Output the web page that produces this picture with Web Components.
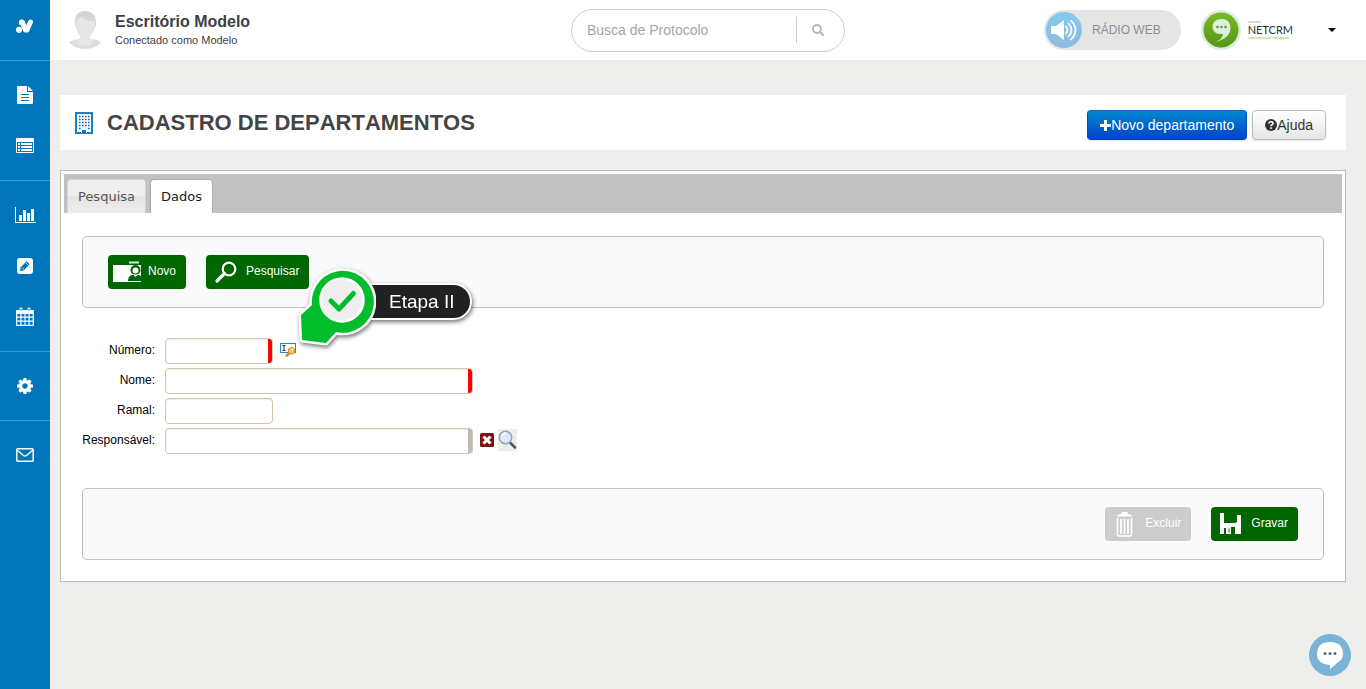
<!DOCTYPE html>
<html lang="pt-BR">
<head>
<meta charset="utf-8">
<title>Cadastro de Departamentos</title>
<style>
  body {
    margin: 0;
    background: #eeeeec;
    font-family: "Liberation Sans", Arial, sans-serif;
    font-size: 12px;
    color: #000;
  }
</style>
</head>
<body>
<app-layout>
  <side-nav slot="nav"></side-nav>
  <top-bar slot="header"></top-bar>
  <page-title>Cadastro de Departamentos</page-title>
  <tab-panel>
    <department-form></department-form>
  </tab-panel>
</app-layout>
<chat-button></chat-button>

<script>
const icons = {
  logo: ['0 0 18 14', '<path d="M6.500 3.500 9.500 11M14.500 3 11 11" stroke="currentColor" stroke-width="5" stroke-linecap="round"/><circle cx="3" cy="10.800" r="3.100" fill="currentColor"/><circle cx="5.800" cy="3.500" r="2.900" fill="currentColor"/>'],
  file: ['0 0 16 18', '<path fill="currentColor" fill-rule="evenodd" d="M1 0h9v6h6v11q0 1-1 1H1q-1 0-1-1V1q0-1 1-1zM4 8v1h8V8zM4 11v1h8v-1zM4 14v1h8v-1z"/><path fill="currentColor" d="M11 0l5 5h-5z"/>'],
  list: ['0 0 18 15', '<path fill="currentColor" fill-rule="evenodd" d="M1 0h16q1 0 1 1v13q0 1-1 1H1q-1 0-1-1V1q0-1 1-1zM1 4v10h16V4z"/><path d="M2 6h2M5 6h11M2 9h2M5 9h11M2 12h2M5 12h11" stroke="currentColor" stroke-width="2"/>'],
  chart: ['0 0 21 16', '<path fill="currentColor" d="M0 0h1v15h20v1H0zM4 8h3v6H4zM8 3h3v11H8zM12 6h3v8h-3zM16 2h3v12h-3z"/>'],
  pencil: ['0 0 16 16', '<rect width="16" height="16" rx="3" fill="currentColor"/><path d="M3 13l.7-3.800 6-6 3.100 3.100-6 6z" fill="#0075ba"/><path d="M5 9.600 7.100 11.700M9 5l2.800 2.800" stroke="#fff" stroke-width=".8"/>'],
  calendar: ['0 0 18 19', '<path fill="currentColor" fill-rule="evenodd" d="M1 3h16q1 0 1 1v14q0 1-1 1H1q-1 0-1-1V4q0-1 1-1zM1.300 7v2.500h3V7zM5.500 7v2.500h3V7zM9.500 7v2.500h3V7zM13.700 7v2.500h3V7zM1.300 10.700v2.800h3v-2.800zM5.500 10.700v2.800h3v-2.800zM9.500 10.700v2.800h3v-2.800zM13.700 10.700v2.800h3v-2.800zM1.300 14.700v3h3v-3zM5.500 14.700v3h3v-3zM9.500 14.700v3h3v-3zM13.700 14.700v3h3v-3z"/><rect x="3.500" y=".3" width="3" height="5.500" rx="1.500" fill="currentColor"/><rect x="11.500" y=".3" width="3" height="5.500" rx="1.500" fill="currentColor"/><path d="M5 1.500v2.500M13 1.500v2.500" stroke="#0075ba"/>'],
  gear: ['128 128 1536 1536', '<path fill="currentColor" d="M1152 896q0-106-75-181t-181-75-181 75-75 181 75 181 181 75 181-75 75-181zm512-109v222q0 12-8 23t-20 13l-185 28q-19 54-39 91 35 50 107 138 10 12 10 25t-9 23q-27 37-99 108t-94 71q-12 0-26-9l-138-108q-44 23-91 38-16 136-29 186-7 28-36 28h-222q-14 0-24.500-8.500t-11.500-21.500l-28-184q-49-16-90-37l-141 107q-10 9-25 9-14 0-25-11-126-114-165-168-7-10-7-23 0-12 8-23 15-21 51-66.500t54-70.500q-27-50-41-99l-183-27q-13-2-21-12.500t-8-23.500v-222q0-12 8-23t19-13l186-28q14-46 39-92-40-57-107-138-10-12-10-24 0-10 9-23 26-36 98.500-107.500t94.500-71.500q13 0 26 10l138 107q44-23 91-38 16-136 29-186 7-28 36-28h222q14 0 24.500 8.500t11.500 21.500l28 184q49 16 90 37l142-107q9-9 24-9 13 0 25 10 129 119 165 170 7 8 7 22 0 12-8 23-15 21-51 66.500t-54 70.500q26 50 41 98l183 28q13 2 21 12.500t8 23.500z"/>'],
  mail: ['0 0 18 14', '<rect x=".8" y=".8" width="16.400" height="12.400" rx="1" fill="none" stroke="currentColor" stroke-width="1.500"/><path d="M1 2q4 3.500 6.500 5.500 1.500 1 3 0Q13 5.500 17 2" fill="none" stroke="currentColor" stroke-width="1.400"/>'],
  search: ['0 0 12 12', '<circle cx="5" cy="5" r="4" fill="none" stroke="currentColor" stroke-width="1.800"/><path d="M8 8l3 3" stroke="currentColor" stroke-width="2" stroke-linecap="round"/>'],
  building: ['0 0 18 22', '<rect x="1" y="1" width="16" height="20" fill="#fff" stroke="#1a7fc0" stroke-width="2"/><path d="M4 4.500h11M4 7.500h11M4 10.500h11M4 13.500h11M4 16.500h11" stroke="#1565b0" stroke-width="1.500" stroke-dasharray="1.600 1.400"/><path d="M6 16h6v5H6z" fill="#fff"/><path d="M7 18h4v3H7z" fill="#1a6fb8"/>'],
  plus: ['0 0 11 11', '<path fill="currentColor" d="M4 0h3v4h4v3H7v4H4V7H0V4h4z"/>'],
  help: ['0 0 12 12', '<circle cx="6" cy="6" r="6" fill="currentColor"/><path d="M4 4.500q0-1.700 2-1.700t2 1.500q0 1-1 1.500T6 7.300" fill="none" stroke="#fff" stroke-width="1.600"/><rect x="5.200" y="8.300" width="1.600" height="1.600" fill="#fff"/>'],
  person: ['0 0 32 38', '<defs><linearGradient id="g" x2="0" y2="1"><stop stop-color="#d2d2d2"/><stop offset="1" stop-color="#e4e4e4"/></linearGradient></defs><path d="M0 31q5-2 9-3 0 6 7 6t8-6q5 1 8 3-5 7-16 7T0 31z" fill="#dcdcdc"/><path d="M11 20h10v7l4 2q-2 6-9 6t-9-6l4-2z" fill="#e6e6e6"/><path d="M6 10Q6 0 16 0t11 10q1 4-1 6-2 8-6 9-4 2-8 0-4-2-5-9-2-2-1-6z" fill="url(#g)"/><path d="M7 12q2-5 5-6 6 5 14 4l-1 6q-2 7-5 8-4 2-8 0-4-3-5-12z" fill="#e6e6e6"/>'],
  speaker: ['0 0 36 36', '<defs><linearGradient id="g" x2="0" y2="1"><stop stop-color="#84cbed"/><stop offset="1" stop-color="#8dbbe0"/></linearGradient></defs><circle cx="18" cy="18" r="18" fill="url(#g)"/><path d="M5 14h5l8-6v20l-8-6H5z" fill="#fff"/><path d="M20 14.500q3 3.500 0 7M22.500 11.500q6 6.500 0 13M25 8.500q9 9.500 0 19" fill="none" stroke="#fff" stroke-width="1.700" stroke-linecap="round"/>'],
  netcrm: ['0 0 40 40', '<defs><linearGradient id="g" x2="0" y2="1"><stop stop-color="#77bd22"/><stop offset="1" stop-color="#579519"/></linearGradient></defs><circle cx="20" cy="20" r="20" fill="#dcecdf"/><circle cx="20" cy="20" r="17.500" fill="url(#g)"/><path d="M14 32q8-3 8-8-10 1-10.500-7Q12 9 20.500 9q9 0 9 9 0 10-15.500 14z" fill="#ddeee0"/><g fill="#579f20"><circle cx="16.500" cy="17" r="1.300"/><circle cx="20.500" cy="17" r="1.300"/><circle cx="24.500" cy="17" r="1.300"/></g>'],
  caret: ['0 0 8 4', '<path fill="currentColor" d="M0 0h8L4 4z"/>'],
  folder: ['0 0 30 24', '<path d="M0 5h28v17H0z" fill="#fff"/><path d="M16 1.500h10v2H16z" fill="#dbe8db"/><circle cx="22.500" cy="10" r="5" fill="#060"/><circle cx="22.500" cy="10.500" r="3" fill="#fff"/><path d="M15 21q0-5 4-6h7q3 1 3 6z" fill="#060"/><path d="M20 14.500h5l-2.500 2.500z" fill="#fff"/>'],
  lens: ['0 0 30 24', '<circle cx="18" cy="9" r="6.300" fill="none" stroke="#fff" stroke-width="2.200"/><path d="M13.500 13.500 6 21" stroke="#fff" stroke-width="3.200" stroke-linecap="round"/>'],
  trash: ['0 0 30 26', '<path d="M6 5.500Q8 3 11.500 3V1h6v2q3.500 0 5.500 2.500z" fill="#fff"/><path d="M7.500 7v16.500q0 1.500 1.500 1.500h11q1.500 0 1.500-1.500V7" fill="none" stroke="#fff" stroke-width="1.600"/><path d="M11 8v15M14.500 8v15M18 8v15" stroke="#fff" stroke-width="1.800"/>'],
  save: ['0 0 30 24', '<path d="M4 1h4v10h12V3h5v19h-6v-7h-4v7h-5v-6H8v6H4z" fill="#fff"/><path d="M20 1h1v9h-1zM12.500 16.500h1v4h-1z" fill="#060"/>'],
  key: ['0 0 16 14', '<rect x=".5" y=".5" width="15" height="9" fill="#f4fbff" stroke="#278bc8"/><path d="M2.500 2.500h3M2.500 7.500h3M4 3v4" stroke="#333"/><path d="M10 9.500l-4 4" stroke="#d48b20" stroke-width="2.500"/><circle cx="11.500" cy="7.800" r="3.300" fill="#f6c55b" stroke="#d28a24"/><circle cx="12.500" cy="6.500" r=".9" fill="#fff"/>'],
  remove: ['0 0 14 14', '<rect width="14" height="14" rx="1.500" fill="#7c1416"/><path d="M3.500 3.500l7 7M10.500 3.500l-7 7" stroke="#fff" stroke-width="3"/>'],
  magnifier: ['0 0 19 22', '<path fill="#ededed" d="M0 0h19v22H0z"/><path d="M12.500 14l4.500 4.500" stroke="#555" stroke-width="2.600" stroke-linecap="round"/><circle cx="7.500" cy="8.500" r="6.200" fill="#dcebfc" stroke="#92a4bd" stroke-width="1.500"/><path d="M4 7q1-3 4-3" stroke="#fff" stroke-width="1.500" fill="none"/>'],
  chat: ['0 0 42 42', '<circle cx="21" cy="21" r="21" fill="#79b3d6"/><path d="M21 35v-4Q8 30 8 20 8 8 21 8t13 12q0 6-6 9-3 3-7 6z" fill="#fff"/><g fill="#53657b"><circle cx="16" cy="19.500" r="1.500"/><circle cx="21" cy="19.500" r="1.500"/><circle cx="26" cy="19.500" r="1.500"/></g>']
};

// drawn at the size of its viewBox unless a width is given
class AppIcon extends HTMLElement {
  connectedCallback() {
    if (this.shadowRoot) return;
    const [box, shape] = icons[this.getAttribute('name')];
    const [, , w, h] = box.split(' ').map(Number);
    const width = Number(this.getAttribute('width') || w);
    const height = Math.round(width * h / w);
    this.attachShadow({ mode: 'open' }).innerHTML = `
      <style>
        :host { display: block; flex: none; }
        svg { display: block; }
      </style>
      <svg width="${width}" height="${height}" viewBox="${box}" fill="none" aria-hidden="true">${shape}</svg>`;
  }
}

// every other element only supplies its markup and styles
class BaseElement extends HTMLElement {
  connectedCallback() {
    if (this.shadowRoot) return;
    this.attachShadow({ mode: 'open' }).innerHTML = this.render();
    this.ready();
  }

  ready() {}
}

class AppLayout extends BaseElement {
  render() {
    return `
      <style>
        :host { display: flex; min-height: 100vh; }
        .page { flex: 1; min-width: 0; }
        main { display: flex; flex-direction: column; gap: 20px; margin: 35px 20px 20px 10px; }
      </style>
      <slot name="nav"></slot>
      <div class="page">
        <slot name="header"></slot>
        <main><slot></slot></main>
      </div>`;
  }
}

class SideNav extends BaseElement {
  render() {
    const groups = [
      [['file', 'Protocolos', 16], ['list', 'Listas', 18]],
      [['chart', 'Relatórios', 21], ['pencil', 'Editar', 16], ['calendar', 'Agenda', 18]],
      [['gear', 'Configurações', 16]],
      [['mail', 'Mensagens', 18]]
    ];
    const link = ([icon, label, width]) =>
      `<a href="#" aria-label="${label}"><app-icon name="${icon}" width="${width}"></app-icon></a>`;

    return `
      <style>
        :host { display: block; flex: none; width: 50px; background: #0075ba; color: #fff; }
        a { display: flex; align-items: center; justify-content: center; height: 51px; color: inherit; }
        .logo { height: 52px; padding-bottom: 8px; border-bottom: 1px solid #26a0e8; }
        .group { padding: 8px 0 9px; border-bottom: 1px solid #26a0e8; }
        .group:last-child { border: 0; }
      </style>
      <nav>
        <a class="logo" href="#" aria-label="Início"><app-icon name="logo"></app-icon></a>
        ${groups.map(group => `<div class="group">${group.map(link).join('')}</div>`).join('')}
      </nav>`;
  }
}

class TopBar extends BaseElement {
  render() {
    return `
      <style>
        :host {
          display: grid;
          grid-template-columns: 1fr auto 1fr;
          align-items: center;
          height: 60px;
          background: #fff;
          color: #3c4045;
        }
        .user { display: flex; align-items: center; gap: 14px; padding-left: 19px; }
        strong { display: block; font-size: 16px; line-height: 20px; }
        small { display: block; font-size: 11px; line-height: 17px; }
        form {
          display: flex;
          align-items: center;
          box-sizing: border-box;
          width: 274px;
          height: 43px;
          border: 1px solid #ccc;
          border-radius: 22px;
        }
        input {
          flex: 1;
          min-width: 0;
          padding: 0 15px;
          border: 0;
          outline: 0;
          background: none;
          font: 14px "Liberation Sans", Arial, sans-serif;
        }
        input::placeholder { color: #a5a5a5; opacity: 1; }
        button { display: flex; border: 0; background: none; padding: 0; cursor: pointer; }
        .find {
          align-items: center;
          justify-content: center;
          width: 48px;
          height: 26px;
          padding-right: 6px;
          border-left: 1px solid #ccc;
          color: #b5b5b5;
        }
        .right { display: flex; align-items: center; justify-content: flex-end; gap: 20px; padding-right: 30px; }
        .radio {
          display: flex;
          align-items: center;
          gap: 10px;
          box-sizing: border-box;
          height: 40px;
          padding: 0 20px 0 2px;
          border-radius: 20px;
          background: #e5e5e5;
          color: #8d8d8d;
          text-decoration: none;
        }
        .brand { display: flex; align-items: center; gap: 7px; color: #26323c; }
        .name { display: flex; flex-direction: column; font-family: Lato, sans-serif; }
        .tiny { font: 4px/4px "Liberation Sans", sans-serif; color: #999; }
        .big { font-size: 11px; line-height: 12px; }
        .green { color: #85bd3b; }
        .menu { margin-left: 15px; color: #000; }
      </style>
      <div class="user">
        <app-icon name="person"></app-icon>
        <div><strong>Escritório Modelo</strong><small>Conectado como Modelo</small></div>
      </div>
      <form role="search">
        <input type="text" placeholder="Busca de Protocolo" aria-label="Busca de Protocolo">
        <button class="find" type="button" aria-label="Buscar"><app-icon name="search"></app-icon></button>
      </form>
      <div class="right">
        <a class="radio" href="#"><app-icon name="speaker"></app-icon>RÁDIO WEB</a>
        <div class="brand">
          <app-icon name="netcrm"></app-icon>
          <div class="name">
            <span class="tiny">sistema</span>
            <span class="big">NETCRM</span>
            <span class="tiny green">comunicação netspeed</span>
          </div>
        </div>
        <button class="menu" type="button" aria-label="Menu"><app-icon name="caret"></app-icon></button>
      </div>`;
  }
}

class PageTitle extends BaseElement {
  render() {
    return `
      <style>
        :host { display: flex; align-items: center; gap: 14px; height: 55px; padding: 0 20px 0 15px; background: #fff; }
        h1 { flex: 1; margin: 0; font-size: 22px; line-height: 28px; font-kerning: none; text-transform: uppercase; color: #444; }
        .actions { display: flex; gap: 5px; align-self: flex-end; margin-bottom: 10px; }
        button {
          display: flex;
          align-items: center;
          height: 30px;
          padding: 0 12px;
          border: 1px solid #bbb;
          border-radius: 4px;
          background: linear-gradient(#fff, #e6e6e6);
          box-shadow: 0 1px 2px rgba(0, 0, 0, .1);
          font: 14px "Liberation Sans", Arial, sans-serif;
          color: #333;
          cursor: pointer;
        }
        .primary { border-color: #0064c0 #0050c4 #003fb8; background: linear-gradient(#0088cc, #0044cc); color: #fff; }
      </style>
      <app-icon name="building"></app-icon>
      <h1><slot></slot></h1>
      <div class="actions">
        <button class="primary" type="button"><app-icon name="plus"></app-icon>Novo departamento</button>
        <button type="button"><app-icon name="help"></app-icon>Ajuda</button>
      </div>`;
  }
}

class TabPanel extends BaseElement {
  render() {
    return `
      <style>
        :host { display: block; padding: 3px; border: 1px solid #bbb; background: #fff; }
        .tabs { display: flex; align-items: flex-end; gap: 4px; height: 39px; padding-left: 3px; background: #c1c1c1; }
        button {
          height: 34px;
          padding: 0 10px;
          border: 1px solid #d3d3d3;
          border-bottom: 0;
          border-radius: 4px 4px 0 0;
          background: linear-gradient(#efefef 50%, #e4e4e4 50%, #ededed);
          font: 13px "DejaVu Sans", Verdana, sans-serif;
          color: #555;
          cursor: pointer;
        }
        button[aria-selected="true"] { border-color: #aaa; background: #fff; color: #212121; }
        section { padding: 23px 18px 18px; }
      </style>
      <div class="tabs" role="tablist">
        <button type="button" role="tab" aria-selected="false">Pesquisa</button>
        <button type="button" role="tab" aria-selected="true">Dados</button>
      </div>
      <section role="tabpanel"><slot></slot></section>`;
  }

  ready() {
    const tabs = this.shadowRoot.querySelectorAll('button');
    tabs.forEach(tab => tab.addEventListener('click', () => {
      tabs.forEach(other => other.setAttribute('aria-selected', other === tab));
    }));
  }
}

class ButtonBar extends BaseElement {
  render() {
    return `
      <style>
        :host {
          display: flex;
          gap: 20px;
          padding: 18px 25px;
          border: 1px solid #bfbfbf;
          border-radius: 5px;
          background: #fafafa;
        }
        :host([align="end"]) { justify-content: flex-end; }
      </style>
      <slot></slot>`;
  }
}

class ActionButton extends BaseElement {
  render() {
    const disabled = this.hasAttribute('disabled') ? 'disabled' : '';
    return `
      <style>
        :host { display: block; }
        button {
          display: flex;
          align-items: center;
          gap: 5px;
          height: 34px;
          padding: 0 10px 0 5px;
          border: 0;
          border-radius: 4px;
          background: #006600;
          color: #fff;
          font: 12px "Liberation Sans", Arial, sans-serif;
          cursor: pointer;
        }
        button:disabled { background: #ccc; cursor: default; }
        span { padding-bottom: 2px; }
      </style>
      <button type="button" ${disabled}>
        <app-icon name="${this.getAttribute('icon')}"></app-icon><span><slot></slot></span>
      </button>`;
  }
}

class FormField extends BaseElement {
  render() {
    return `
      <style>
        :host { display: flex; align-items: center; height: 26px; }
        label { width: 73px; margin-right: 10px; padding-bottom: 2px; text-align: right; white-space: nowrap; }
        input {
          box-sizing: border-box;
          width: 108px;
          height: 26px;
          margin: 0 7px 0 0;
          padding: 0 8px;
          border: 1px solid #d2c6ac;
          border-radius: 4px;
          outline: 0;
          background: linear-gradient(var(--mark, #fff), var(--mark, #fff)) right / 4px 100% no-repeat #fff;
          box-shadow: inset 0 1px 1px rgba(0, 0, 0, .08);
          font: 12px "Liberation Sans", Arial, sans-serif;
        }
        :host([wide]) input { width: 308px; }
        :host([required]) input { --mark: #f00; }
        :host([lookup]) input { --mark: #bbb; }
        .tools { display: flex; align-items: center; gap: 4px; padding-bottom: 2px; }
      </style>
      <label for="field">${this.getAttribute('label')}:</label>
      <input id="field" type="text">
      <div class="tools"><slot></slot></div>`;
  }
}

class IconButton extends BaseElement {
  render() {
    return `
      <style>
        :host { display: block; }
        button { display: block; padding: 0; border: 0; background: none; cursor: pointer; }
      </style>
      <button type="button" aria-label="${this.getAttribute('label')}">
        <app-icon name="${this.getAttribute('icon')}"></app-icon>
      </button>`;
  }
}

// green pin with a dark caption, floats over the form
class StepMarker extends BaseElement {
  render() {
    return `
      <style>
        :host { display: flex; align-items: center; filter: drop-shadow(1px 2px 2px rgba(0, 0, 0, .55)); }
        svg { display: block; position: relative; z-index: 1; }
        span {
          margin: -12px 0 0 -14px;
          padding: 0 15px 0 25px;
          border: 2px solid #fff;
          border-radius: 0 19px 19px 0;
          background: #212121;
          color: #fff;
          font-size: 19px;
          line-height: 33px;
        }
      </style>
      <svg width="78" height="80" viewBox="0 0 78 80" aria-hidden="true">
        <path d="M3 48 14 38A31 31 0 1 1 38 65L28 76 4 73z" fill="#00bd2c" stroke="#fff" stroke-width="5" stroke-linejoin="round" paint-order="stroke"/>
        <circle cx="44" cy="33" r="21.500" fill="#efefef" stroke="#fff" stroke-width="2.500"/>
        <path d="M33 34l8 8 14.500-15.500" fill="none" stroke="#00bd2c" stroke-width="5" stroke-linecap="round" stroke-linejoin="round"/>
      </svg>
      <span><slot></slot></span>`;
  }
}

class DepartmentForm extends BaseElement {
  render() {
    return `
      <style>
        :host { display: block; position: relative; }
        form { display: flex; flex-direction: column; gap: 4px; margin: 30px 0 34px; }
        step-marker { position: absolute; top: 31px; left: 216px; }
      </style>
      <button-bar>
        <action-button icon="folder">Novo</action-button>
        <action-button icon="lens">Pesquisar</action-button>
      </button-bar>
      <form>
        <form-field label="Número" required><icon-button icon="key" label="Gerar número"></icon-button></form-field>
        <form-field label="Nome" wide required></form-field>
        <form-field label="Ramal"></form-field>
        <form-field label="Responsável" wide lookup>
          <icon-button icon="remove" label="Limpar responsável"></icon-button>
          <icon-button icon="magnifier" label="Buscar responsável"></icon-button>
        </form-field>
      </form>
      <button-bar align="end">
        <action-button icon="trash" disabled>Excluir</action-button>
        <action-button icon="save">Gravar</action-button>
      </button-bar>
      <step-marker>Etapa II</step-marker>`;
  }
}

class ChatButton extends BaseElement {
  render() {
    return `
      <style>
        :host { display: block; position: fixed; right: 15px; bottom: 13px; }
        button { display: block; padding: 0; border: 0; background: none; cursor: pointer; }
      </style>
      <button type="button" aria-label="Chat"><app-icon name="chat"></app-icon></button>`;
  }
}

customElements.define('app-icon', AppIcon);
customElements.define('app-layout', AppLayout);
customElements.define('side-nav', SideNav);
customElements.define('top-bar', TopBar);
customElements.define('page-title', PageTitle);
customElements.define('tab-panel', TabPanel);
customElements.define('button-bar', ButtonBar);
customElements.define('action-button', ActionButton);
customElements.define('form-field', FormField);
customElements.define('icon-button', IconButton);
customElements.define('step-marker', StepMarker);
customElements.define('department-form', DepartmentForm);
customElements.define('chat-button', ChatButton);
</script>
</body>
</html>
